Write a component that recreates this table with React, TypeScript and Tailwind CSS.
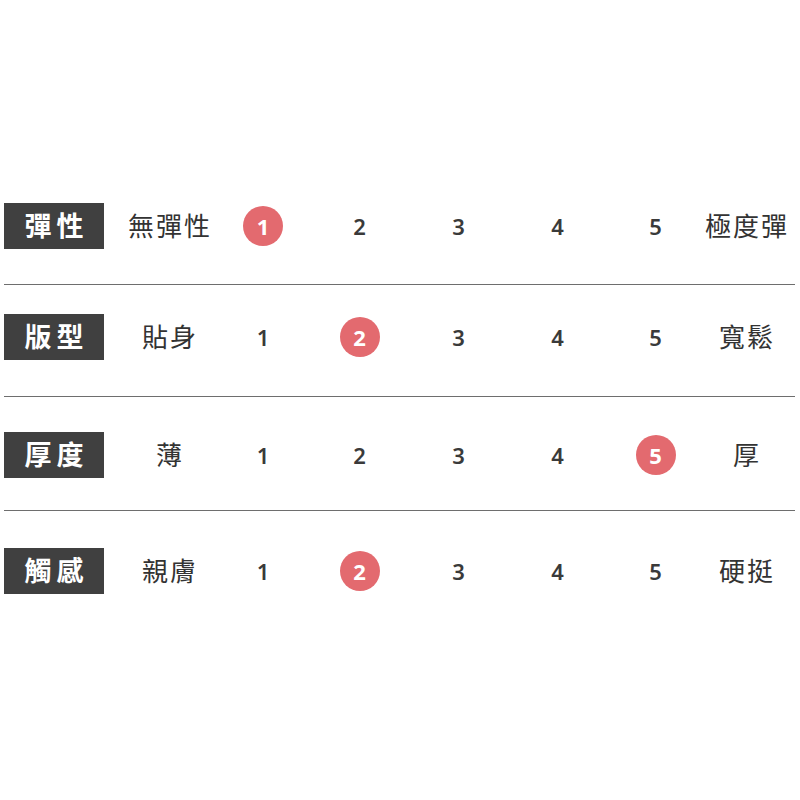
const ROWS = [
	{ label: "彈性", low: "無彈性", high: "極度彈", value: 1, pad: "pb-[35px]" },
	{ label: "版型", low: "貼身", high: "寬鬆", value: 2, pad: "pt-[29px] pb-[36px]" },
	{ label: "厚度", low: "薄", high: "厚", value: 5, pad: "pt-[35px] pb-[32px]" },
	{ label: "觸感", low: "親膚", high: "硬挺", value: 2, pad: "pt-[37px]" },
];

const NUM_WIDTHS = ["w-[94px]", "w-[99px]", "w-[99px]", "w-[99px]", "w-[97px]"];

function Num({ n, active, width }: { n: number; active: boolean; width: string }) {
	return (
		<div className={`${width} flex justify-center`}>
			{active ? (
				<span className="w-[40px] h-[40px] rounded-full bg-[#e36a6f] text-white flex items-center justify-center text-[22px] font-bold">
					{n}
				</span>
			) : (
				<span className="text-[22px] font-semibold text-[#3a3a3a]">{n}</span>
			)}
		</div>
	);
}

export default function App() {
	return (
		<main
			className="w-[800px] h-[800px] bg-white pt-[203px] pl-[4px] pr-[5px]"
			style={{ fontFamily: '"Noto Sans", "Noto Sans CJK TC", sans-serif' }}
		>
			{ROWS.map((row, i) => (
				<div key={row.label}>
					{i > 0 && <div className="h-px bg-[#6e6e6e]" />}
					<div className={`flex items-center ${row.pad}`}>
						<div className="w-[100px] h-[46px] bg-[#404040] text-white flex items-center justify-center text-[27px] font-semibold tracking-[5px] pl-[5px]">
							{row.label}
						</div>
						<div className="ml-[20px] w-[92px] text-center text-[26px] tracking-[2px] text-[#333]">
							{row.low}
						</div>
						{[1, 2, 3, 4, 5].map((n, j) => (
							<Num key={n} n={n} active={row.value === n} width={NUM_WIDTHS[j]} />
						))}
						<div className="w-[86px] text-center text-[26px] tracking-[2px] text-[#333]">
							{row.high}
						</div>
					</div>
				</div>
			))}
		</main>
	);
}
